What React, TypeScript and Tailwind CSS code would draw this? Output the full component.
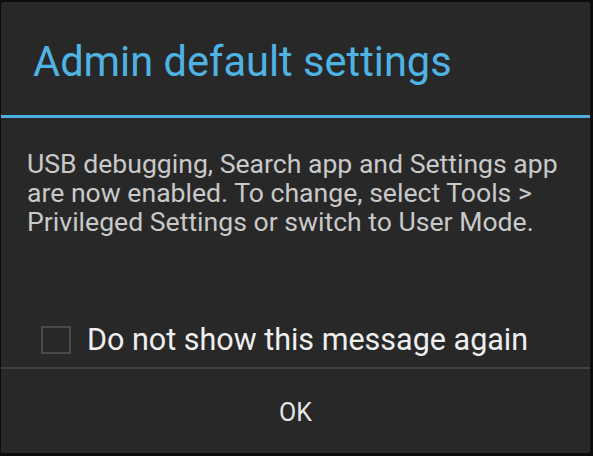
import React from "react";

export default function App() {
  return (
    <div className="w-[593px] h-[456px] bg-[#0d0d0d] overflow-hidden" style={{ fontFamily: "Roboto, 'Noto Sans', sans-serif" }}>
      <div className="ml-[1px] mt-[2px] w-[589px] h-[451px] bg-[#282828] rounded-[2px] flex flex-col">
        <div className="h-[113px] pl-[32px] pt-[39px]">
          <div className="text-[41.6px] leading-none text-[#4fb3e3] whitespace-nowrap">Admin default settings</div>
        </div>
        <div className="h-[3px] bg-[#4aaee0]" />
        <div className="px-[26px] pt-[31px] text-[26.6px] leading-[29px] text-[#c9c9c9]">
          <div className="whitespace-nowrap">USB debugging, Search app and Settings app</div>
          <div className="whitespace-nowrap">are now enabled. To change, select Tools &gt;</div>
          <div className="whitespace-nowrap">Privileged Settings or switch to User Mode.</div>
        </div>
        <div className="flex-1" />
        <div className="flex items-center pl-[40px] h-[28px]">
          <div className="w-[30px] h-[28px] border-2 border-[#4a4a4a]" />
          <span className="ml-[16px] text-[30.5px] text-[#efefef] leading-[28px] whitespace-nowrap">Do not show this message again</span>
        </div>
        <div className="h-[2px] bg-[#404040] mt-[13px]" />
        <div className="h-[84px] flex items-center justify-center pt-[2px]">
          <span className="text-[25px] leading-none text-[#e6e6e6]">OK</span>
        </div>
      </div>
    </div>
  );
}
